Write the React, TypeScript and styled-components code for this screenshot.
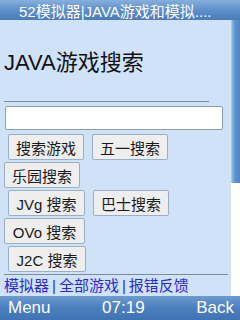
import { FC } from "react";
import styled, { createGlobalStyle } from "styled-components";

const GlobalStyle = createGlobalStyle`
  html, body {
    margin: 0;
    padding: 0;
  }
  body {
    font-family: "Liberation Sans", "Noto Sans CJK SC", sans-serif;
  }
`;

const Screen = styled.div`
  display: flex;
  flex-direction: column;
  width: 240px;
  height: 320px;
  overflow: hidden;
  background-color: #d0e2f8;
`;

const TitleBar = styled.div`
  height: 20px;
  padding-left: 19px;
  display: flex;
  align-items: center;
  background-image: linear-gradient(#86afdc, #5b8dc8 55%, #4a7cba);
  color: #ffffff;
  font-size: 15px;
  white-space: nowrap;
  overflow: hidden;
`;

const Middle = styled.div`
  flex: 1;
  display: flex;
  min-height: 0;
`;

const Content = styled.div`
  flex: 1;
  display: flex;
  flex-direction: column;
  padding: 0 3px 0 4px;
`;

const Heading = styled.h1`
  margin: 30px 0 0 0;
  font-size: 22px;
  line-height: 26px;
  font-weight: normal;
  color: #111111;
`;

const Rule = styled.div<{ $width: number; $top?: number }>`
  margin-top: ${(p) => p.$top ?? 0}px;
  width: ${(p) => p.$width}px;
  height: 1px;
  background-color: #7d8a9a;
`;

const SearchInput = styled.div`
  margin: 4px 0 4px 1px;
  width: 216px;
  height: 22px;
  background-color: #ffffff;
  border: 1px solid #8c9bb0;
  border-radius: 2px;
`;

const Row = styled.div`
  display: flex;
  margin-bottom: 2px;
`;

const Button = styled.div<{ $left: number; $width: number }>`
  margin-left: ${(p) => p.$left}px;
  width: ${(p) => p.$width}px;
  height: 24px;
  display: flex;
  align-items: center;
  justify-content: center;
  background-color: #eeeeee;
  border: 1px solid #9aaec6;
  border-radius: 2px;
  font-size: 15px;
  color: #1a1a1a;
`;

const Links = styled.div`
  margin-top: 2px;
  font-size: 15px;
  line-height: 18px;
  color: #2a2ad0;
  white-space: nowrap;
`;

const Divider = styled.span`
  margin: 0 3px;
`;

const ScrollTrack = styled.div`
  width: 9px;
  display: flex;
  flex-direction: column;
  background-color: #ffffff;
`;

const ScrollThumb = styled.div`
  height: 163px;
  background-image: linear-gradient(90deg, #8cb6e0, #5b92c8 40%, #4f86bf);
  border-left: 1px solid #a9c8e8;
`;

const SoftBar = styled.div`
  height: 24px;
  display: flex;
  align-items: center;
  justify-content: space-between;
  padding: 0 6px 0 8px;
  background-image: linear-gradient(#6c9bd0, #4b7fbe 50%, #3f73b3);
  color: #ffffff;
  font-size: 17px;
`;

const buttons = [
  [
    { label: "搜索游戏", left: 4, width: 74 },
    { label: "五一搜索", left: 8, width: 74 },
  ],
  [{ label: "乐园搜索", left: 0, width: 74 }],
  [
    { label: "JVg 搜索", left: 4, width: 75 },
    { label: "巴士搜索", left: 8, width: 74 },
  ],
  [{ label: "OVo 搜索", left: 0, width: 79 }],
  [{ label: "J2C 搜索", left: 4, width: 76 }],
];

const App: FC = () => {
  return (
    <>
      <GlobalStyle />
      <Screen>
        <TitleBar>52模拟器|JAVA游戏和模拟....</TitleBar>
        <Middle>
          <Content>
            <Heading>JAVA游戏搜索</Heading>
            <Rule $width={205} $top={25} />
            <SearchInput />
            {buttons.map((row, i) => (
              <Row key={i}>
                {row.map((b) => (
                  <Button key={b.label} $left={b.left} $width={b.width}>
                    {b.label}
                  </Button>
                ))}
              </Row>
            ))}
            <Rule $width={224} />
            <Links>
              模拟器<Divider>|</Divider>全部游戏<Divider>|</Divider>报错反馈
            </Links>
          </Content>
          <ScrollTrack>
            <ScrollThumb />
          </ScrollTrack>
        </Middle>
        <SoftBar>
          <span>Menu</span>
          <span>07:19</span>
          <span>Back</span>
        </SoftBar>
      </Screen>
    </>
  );
};

export default App;
